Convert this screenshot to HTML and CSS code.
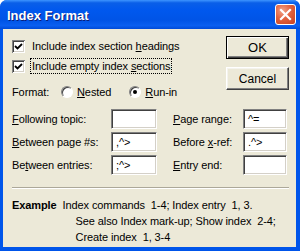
FILE: index.html
```html
<!DOCTYPE html>
<html>
  <head>
    <meta charset="utf-8">
    <title>Index Format</title>
    <link rel="stylesheet" href="styles.css">
  </head>
  <body>
    <div class="window">
      <div class="titlebar">
        <span class="title">Index Format</span>
        <span class="close">
          <svg width="21" height="21" viewBox="0 0 21 21"><path d="M6 6 L15 15 M15 6 L6 15" stroke="#fff" stroke-width="2.2" stroke-linecap="square"/></svg>
        </span>
      </div>
      <div class="body">
        <div class="top">
          <div class="options">
            <label class="check">
              <span class="box"><svg width="9" height="9" viewBox="0 0 9 9"><path d="M1 4 L3.5 6.5 L8 2" fill="none" stroke="#000" stroke-width="1.8"/></svg></span>
              <span class="txt">Include index section <u>h</u>eadings</span>
            </label>
            <label class="check">
              <span class="box"><svg width="9" height="9" viewBox="0 0 9 9"><path d="M1 4 L3.5 6.5 L8 2" fill="none" stroke="#000" stroke-width="1.8"/></svg></span>
              <span class="txt focus">Include empty index <u>s</u>ections</span>
            </label>
            <div class="format">
              <span class="format-label">Format:</span>
              <label class="radio nested"><span class="dot"></span><u>N</u>ested</label>
              <label class="radio"><span class="dot on"></span><u>R</u>un-in</label>
            </div>
          </div>
          <div class="buttons">
            <button class="btn btn-default">OK</button>
            <button class="btn">Cancel</button>
          </div>
        </div>

        <div class="fields">
          <span class="lbl"><u>F</u>ollowing topic:</span>
          <span class="field"></span>
          <span></span>
          <span class="lbl"><u>P</u>age range:</span>
          <span class="field">^=</span>

          <span class="lbl"><u>B</u>etween page #s:</span>
          <span class="field">,^&gt;</span>
          <span></span>
          <span class="lbl">Before <u>x</u>-ref:</span>
          <span class="field">.^&gt;</span>

          <span class="lbl">Be<u>t</u>ween entries:</span>
          <span class="field">;^&gt;</span>
          <span></span>
          <span class="lbl"><u>E</u>ntry end:</span>
          <span class="field"></span>
        </div>

        <div class="sep"></div>

        <div class="example">
          <b>Example</b>
          <div class="lines">
            <div>Index commands  1-4; Index entry  1, 3.</div>
            <div class="indent">See also Index mark-up; Show index  2-4;</div>
            <div class="indent">Create index  1, 3-4</div>
          </div>
        </div>
      </div>
    </div>
  </body>
</html>
```

FILE: styles.css
```css
html{background:#fff}
body{margin:0;padding:0;font-family:'Liberation Sans',Arial,sans-serif;font-size:11px;letter-spacing:-0.1px;color:#000}
*{box-sizing:border-box}
u{text-decoration:underline;text-underline-offset:1px}

.window{width:300px;height:251px;display:flex;flex-direction:column;border-radius:7px 7px 0 0;overflow:hidden;background:#0055ea}
.titlebar{height:29px;flex:0 0 29px;display:flex;align-items:center;justify-content:space-between;padding:0 4px 0 7px;
  background:linear-gradient(to bottom,#3d95ff 0,#0a5fe8 10%,#0058ee 35%,#0054e6 70%,#0a5ff0 88%,#004bd8 100%)}
.title{font-weight:bold;font-size:13px;letter-spacing:0;color:#fff;text-shadow:1px 1px 0 #0a1e7a;padding-top:1px}
.close{width:21px;height:21px;display:block;border:1px solid #fff;border-radius:3px;
  background:radial-gradient(circle at 35% 30%,#f1a48a 0,#e2623f 45%,#c8401e 100%)}
.close svg{display:block;margin:-1px}

.body{flex:1;margin:0 4px 4px 3px;background:#ece9d8;padding:6px 8px 0 9px;display:flex;flex-direction:column}
.top{display:flex;justify-content:space-between}
.options{padding-top:1px}
.check{display:flex;align-items:center;height:20px}
.box{width:13px;height:13px;display:flex;align-items:center;justify-content:center;background:#fff;margin-right:5px;
  box-shadow:inset 1px 1px 0 #808080,inset -1px -1px 0 #fff,inset 2px 2px 0 #404040,inset -2px -2px 0 #d4d0c8}
.box svg{display:block}
.txt{padding:1px 1px;border:1px dotted transparent}
.txt.focus{border-color:#000}
.format{display:flex;align-items:center;height:26px;padding-top:6px}
.format-label{width:37px}
.radio{display:flex;align-items:center}
.radio.nested{margin-left:12px;margin-right:18px}
.dot{width:12px;height:12px;border-radius:50%;background:#fff;margin-right:4px;display:flex;align-items:center;justify-content:center;
  border:1px solid;border-color:#808080 #fff #fff #808080;box-shadow:inset 1px 1px 0 #404040}
.dot.on::after{content:"";width:4px;height:4px;border-radius:50%;background:#000}

.buttons{display:flex;flex-direction:column;gap:8px;padding-top:1px;margin-right:-1px}
.btn{width:63px;height:23px;font-family:inherit;font-size:12px;letter-spacing:0;background:#ece9d8;border:1px solid;border-color:#fff #404040 #404040 #fff;
  box-shadow:inset -1px -1px 0 #808080,inset 1px 1px 0 #f4f3ee;padding:0;margin:0}
.btn-default{border:1px solid #000;box-shadow:inset 1px 1px 0 #fff,inset -1px -1px 0 #404040,inset -2px -2px 0 #808080;font-size:13px}

.fields{display:grid;grid-template-columns:99px 46px 16px 70px 44px;grid-auto-rows:20px;row-gap:3px;align-items:center;margin-top:7px}
.lbl{white-space:nowrap}
.field{height:20px;background:#fff;padding:3px 4px 0;white-space:pre;
  border:1px solid;border-color:#808080 #fff #fff #808080;box-shadow:inset 1px 1px 0 #404040,inset -1px -1px 0 #d4d0c8}

.sep{height:2px;border-top:1px solid #aca899;border-bottom:1px solid #fff;margin:12px -1px 0 0}
.example{display:flex;margin-top:8px;line-height:16px}
.example b{font-weight:bold;margin-right:6px}
.lines div{white-space:pre}
.lines .indent{margin-left:13px}
```
